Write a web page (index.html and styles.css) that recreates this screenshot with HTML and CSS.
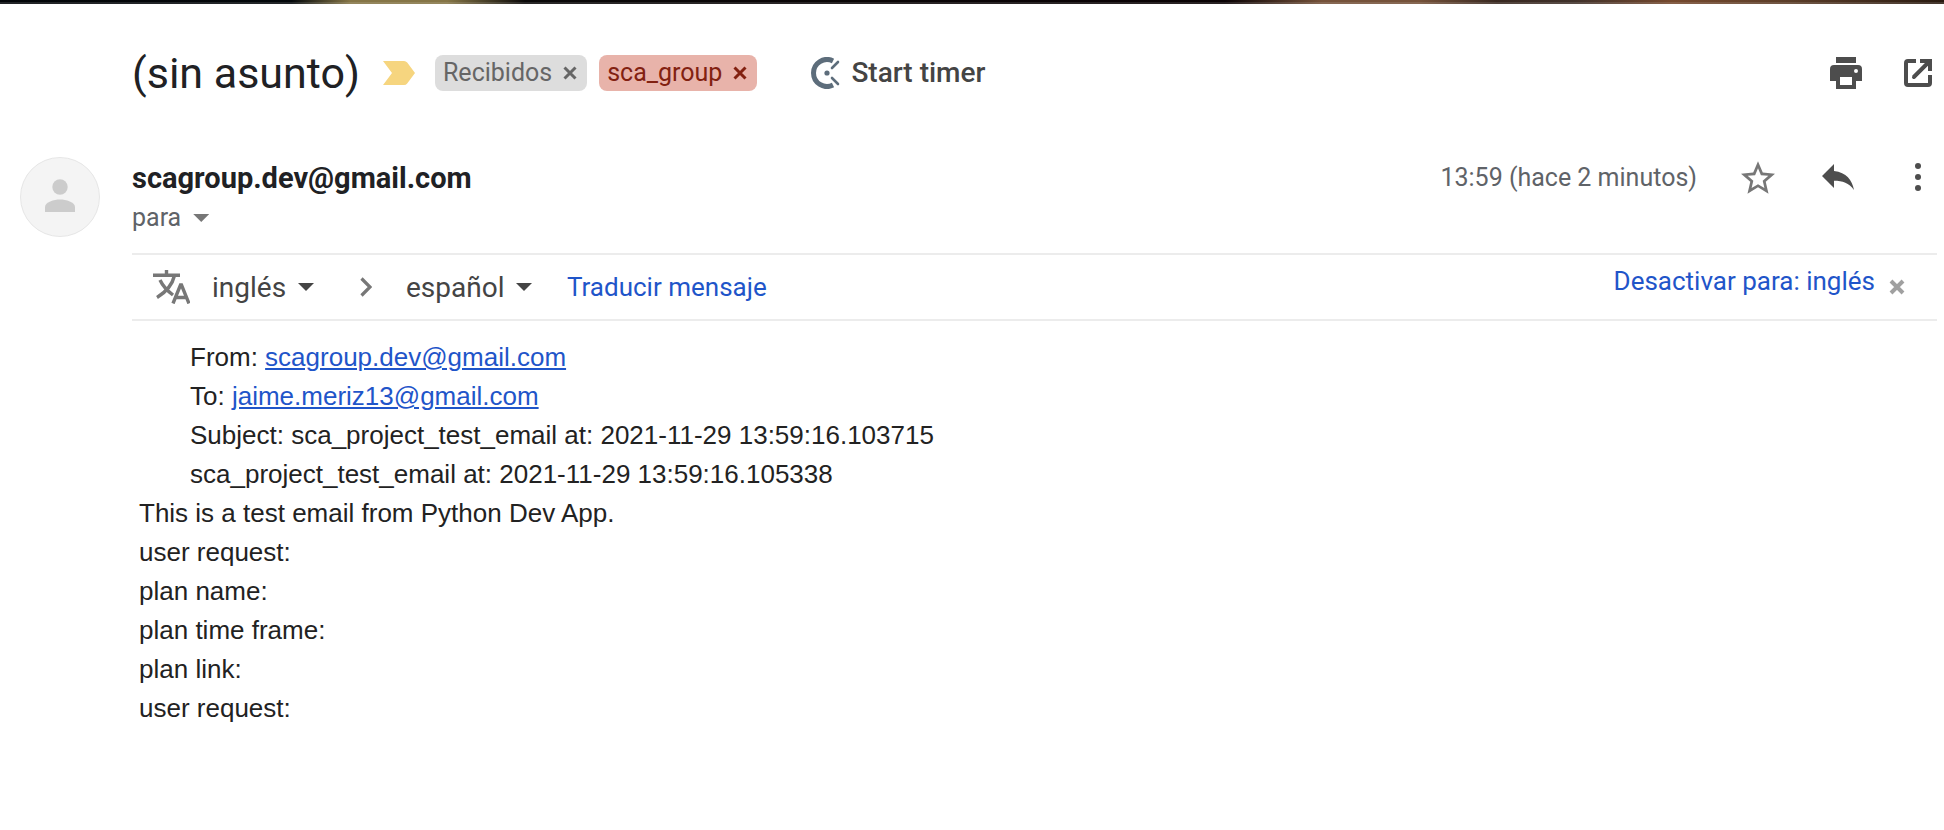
FILE: index.html
```html
<!DOCTYPE html>
<html lang="es">
<head>
<meta charset="utf-8">
<title>(sin asunto)</title>
<link rel="stylesheet" href="styles.css">
</head>
<body>
<div class="backdrop"></div>
<main class="mail">
  <header class="subject-bar">
    <h1 class="subject">(sin asunto)</h1>
    <button class="icon-button important" aria-label="Importante">
      <svg width="32" height="24" viewBox="0 0 32 24"><path fill="#f6d57f" d="M0 0h21q2 0 3.200 1.500L32 12l-7.800 10.500Q23 24 21 24H0l9-12z"/></svg>
    </button>
    <ul class="labels">
      <li class="chip">Recibidos
        <button class="chip-remove" aria-label="Quitar Recibidos"><svg width="14" height="14" viewBox="0 0 14 14"><path d="M1.500 1.500l11 11M12.500 1.500l-11 11" stroke="currentColor" stroke-width="3"/></svg></button>
      </li>
      <li class="chip chip-red">sca_group
        <button class="chip-remove" aria-label="Quitar sca_group"><svg width="14" height="14" viewBox="0 0 14 14"><path d="M1.500 1.500l11 11M12.500 1.500l-11 11" stroke="currentColor" stroke-width="3"/></svg></button>
      </li>
    </ul>
    <button class="timer">
      <svg width="29" height="32" viewBox="0 0 29 32" fill="none" stroke="#5d6d7b"><path stroke-width="5" d="M22 3.900A13.500 13.500 0 1 0 22 28.100"/><circle cx="16" cy="16" r="2.600" fill="#5d6d7b" stroke="none"/><path stroke-width="2.600" stroke-linecap="round" d="M21 11l6-6M21 21l6 6"/></svg>
      Start timer
    </button>
    <div class="page-actions">
      <button class="icon-button" aria-label="Imprimir">
        <svg width="32" height="32" viewBox="0 0 32 32" fill="#4d4d4d"><path d="M6 0h20v6H6z"/><path fill-rule="evenodd" d="M4 8h24a4 4 0 0 1 4 4v12h-6v8H6v-8H0V12a4 4 0 0 1 4-4zm6 12v8h12v-8zM26 12a2 2 0 1 0 0 4 2 2 0 0 0 0-4z"/></svg>
      </button>
      <button class="icon-button" aria-label="En ventana nueva">
        <svg width="28" height="28" viewBox="0 0 28 28" fill="none" stroke="#4d4d4d" stroke-width="4"><path d="M12 2H4a2 2 0 0 0-2 2v20a2 2 0 0 0 2 2h20a2 2 0 0 0 2-2v-8"/><path stroke="none" fill="#4d4d4d" d="M16 0h12v12h-4V6.600L11 19.600 8.200 16.800 21 4h-5z"/><path stroke-linecap="round" stroke-width="3.600" d="M9.800 18.200L24 4"/></svg>
      </button>
    </div>
  </header>

  <article class="message">
    <svg class="avatar" width="80" height="80" viewBox="0 0 80 80" role="img" aria-label="Foto de perfil"><circle cx="40" cy="40" r="39.500" fill="#f4f4f4" stroke="#e6e6e6"/><circle cx="40" cy="30" r="7.700" fill="#ccc"/><path fill="#ccc" d="M25 55v-5c0-5 9-7.500 15-7.500S55 45 55 50v5z"/></svg>
    <div class="message-main">
      <div class="message-head">
        <div class="sender">
          <h2 class="sender-name">scagroup.dev@gmail.com</h2>
          <button class="recipients">para <span class="caret caret-light"></span></button>
        </div>
        <div class="message-meta">
          <time class="time" datetime="2021-11-29T13:59">13:59 (hace 2 minutos)</time>
          <button class="icon-button star" aria-label="Destacar">
            <svg width="34" height="33" viewBox="2 2 20 19"><path fill="#777" d="M22 9.240l-7.190-.62L12 2 9.190 8.630 2 9.240l5.460 4.730L5.820 21 12 17.270 18.180 21l-1.630-7.030zM12 15.400l-3.760 2.270 1-4.280-3.320-2.880 4.380-.38L12 6.100l1.710 4.040 4.380.38-3.320 2.880 1 4.280z"/></svg>
          </button>
          <button class="icon-button reply" aria-label="Responder">
            <svg width="32" height="26" viewBox="0 0 32 26"><path fill="#4d4d4d" d="M12 7V0L0 12l12 12v-7.200c8.500 0 15 2.200 20 9.200C30 16 24.500 8.500 12 7z"/></svg>
          </button>
          <button class="icon-button more" aria-label="Más">
            <svg width="6" height="28" viewBox="0 0 6 28" fill="#4d4d4d"><circle cx="3" cy="3" r="3"/><circle cx="3" cy="14" r="3"/><circle cx="3" cy="25" r="3"/></svg>
          </button>
        </div>
      </div>

      <div class="translate-bar">
        <svg class="translate-icon" width="37" height="34" viewBox="0 0 37 34" fill="none" stroke="#777" stroke-width="3.400"><path d="M0 5.200h27M13.500 0v5M21.500 5.500C19.500 14 13 22 4 27.500M7 10c3 6.500 7 10.500 13 15"/><path d="M20 33.500l7.500-18.500h1L36 33.500M22.500 27.500h11"/></svg>
        <label class="picker"><select class="language" aria-label="Idioma de origen"><option>inglés</option></select><span class="caret"></span></label>
        <svg class="chevron" width="12" height="20" viewBox="0 0 12 20"><path fill="none" stroke="#777" stroke-width="3.200" d="M1.500 1.500L10 10l-8.500 8.500"/></svg>
        <label class="picker"><select class="language" aria-label="Idioma de destino"><option>español</option></select><span class="caret"></span></label>
        <a class="translate-link" href="#traducir">Traducir mensaje</a>
        <div class="translate-off">
          <a href="#desactivar">Desactivar para: inglés</a>
          <button class="icon-button dismiss" aria-label="Cerrar"><svg width="16" height="16" viewBox="0 0 16 16"><path d="M2 2l12 12M14 2L2 14" stroke="#a0a0a0" stroke-width="4"/></svg></button>
        </div>
      </div>

      <div class="body">
        <div class="body-headers">
          <div>From: <a href="mailto:scagroup.dev@gmail.com">scagroup.dev@gmail.com</a></div>
          <div>To: <a href="mailto:jaime.meriz13@gmail.com">jaime.meriz13@gmail.com</a></div>
          <div>Subject: sca_project_test_email at: 2021-11-29 13:59:16.103715</div>
          <div>sca_project_test_email at: 2021-11-29 13:59:16.105338</div>
        </div>
        <div>This is a test email from Python Dev App.</div>
        <div>user request:</div>
        <div>plan name:</div>
        <div>plan time frame:</div>
        <div>plan link:</div>
        <div>user request:</div>
      </div>
    </div>
  </article>
</main>
</body>
</html>
```
FILE: styles.css
```css
* { box-sizing: border-box; }

body {
  margin: 0;
  background: #fff;
  color: #202124;
  font-family: Roboto, "Liberation Sans", sans-serif;
  font-size: 25px;
}

h1, h2, ul { margin: 0; padding: 0; }

button, select {
  border: 0;
  padding: 0;
  background: none;
  color: inherit;
  font: inherit;
  cursor: pointer;
}

svg { display: block; flex: none; }

a { color: #1f55c9; text-decoration: none; }

.backdrop {
  height: 4px;
  background:
    linear-gradient(transparent 50%, rgba(255, 255, 255, .12) 50%),
    linear-gradient(90deg, #020508 0, #03070a 15%, #857546 18%, #857546 23%, #0a0808 27%, #0a0204 63%, #75523a 68%, #75523a 73%, #382820 77%, #40312a 81%, #75492e 86%, #5b3d28 92%, #291a10 100%);
}

.icon-button { display: flex; flex: none; }

.subject-bar {
  display: flex;
  align-items: center;
  min-height: 138px;
  padding: 0 12px 1px 132px;
}

.subject {
  font-size: 43px;
  font-weight: 400;
  line-height: 56px;
}

.important { margin-left: 23px; }

.labels {
  display: flex;
  gap: 12px;
  margin-left: 20px;
  list-style: none;
}

.chip {
  display: flex;
  align-items: center;
  gap: 11px;
  height: 36px;
  padding: 0 10px 0 8px;
  border-radius: 8px;
  background: #ddd;
  color: #666;
}

.chip-red { background: #e8b3aa; color: #822111; }

.timer {
  display: flex;
  align-items: center;
  gap: 11px;
  margin-left: 54px;
  color: #444;
  font-size: 28px;
  font-weight: 500;
}

.page-actions {
  display: flex;
  align-items: center;
  gap: 42px;
  margin-left: auto;
}

.message {
  display: grid;
  grid-template-columns: 80px 1fr;
  column-gap: 32px;
  padding: 0 7px 0 20px;
}

.avatar { margin-top: 15px; }

.message-head {
  display: flex;
  justify-content: space-between;
  height: 111px;
  padding-top: 16px;
}

.sender-name {
  font-size: 29px;
  font-weight: 700;
  line-height: 40px;
}

.recipients {
  display: flex;
  align-items: center;
  gap: 12px;
  color: #5f6368;
  line-height: 40px;
}

.message-meta {
  display: flex;
  align-items: center;
  height: 38px;
  padding-right: 16px;
  color: #5f6368;
}

.star { margin-left: 44px; }
.reply { margin-left: 47px; }
.more { margin-left: 61px; }

.caret {
  width: 16px;
  height: 8px;
  background: #444;
  clip-path: polygon(0 0, 100% 0, 50% 100%);
  pointer-events: none;
}

.caret-light { background: #777; }

.translate-bar {
  display: flex;
  align-items: center;
  height: 68px;
  padding: 0 32px 0 21px;
  border: solid #ececec;
  border-width: 2px 0;
}

.picker {
  display: flex;
  align-items: center;
  gap: 11px;
  margin-left: 22px;
  color: #444;
  font-size: 28px;
}

.language { appearance: none; }

.chevron { margin-left: 46px; }

.chevron + .picker { margin-left: 34px; }

.translate-bar a { font-size: 26px; }

.translate-link { margin-left: 35px; }

.translate-off {
  display: flex;
  align-items: flex-start;
  gap: 14px;
  height: 44px;
  margin-left: auto;
  line-height: 32px;
}

.dismiss { align-self: center; }

.body {
  padding: 17px 7px;
  color: #222;
  font-family: "Liberation Sans", Arial, sans-serif;
  font-size: 26px;
  line-height: 39px;
}

.body a { text-decoration: underline; }

.body .body-headers { padding-left: 51px; }
```
